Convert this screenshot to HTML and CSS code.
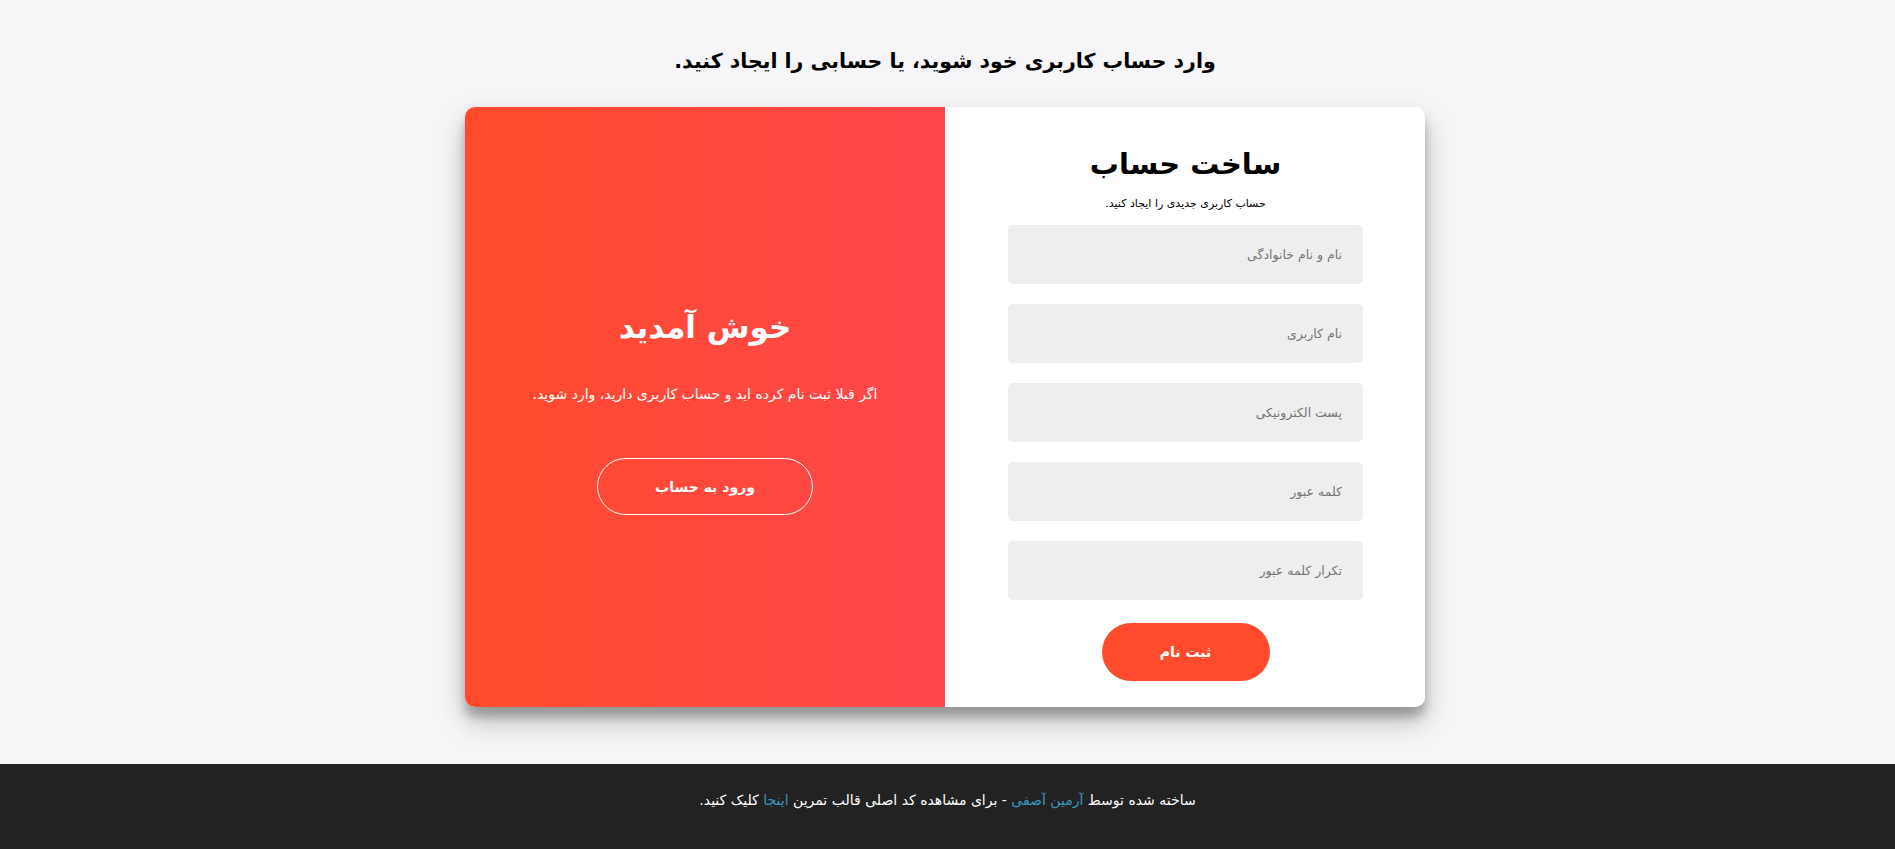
FILE: index.html
```html
<!DOCTYPE html>
<html lang="fa" dir="rtl">
<head>
<meta charset="utf-8">
<title>ساخت حساب</title>
<link rel="stylesheet" href="styles.css">
</head>
<body>
<main class="page">
  <h2 class="lead">وارد حساب کاربری خود شوید، یا حسابی را ایجاد کنید.</h2>
  <div class="card">
    <form class="signup">
      <h1 class="signup-title">ساخت حساب</h1>
      <p class="signup-sub">حساب کاربری جدیدی را ایجاد کنید.</p>
      <input class="field" type="text" placeholder="نام و نام خانوادگی">
      <input class="field" type="text" placeholder="نام کاربری">
      <input class="field" type="email" placeholder="پست الکترونیکی">
      <input class="field" type="password" placeholder="کلمه عبور">
      <input class="field" type="password" placeholder="تکرار کلمه عبور">
      <button class="submit" type="button">ثبت نام</button>
    </form>
    <div class="overlay">
      <h1 class="overlay-title">خوش آمدید</h1>
      <p class="overlay-text">اگر قبلا ثبت نام کرده اید و حساب کاربری دارید، وارد شوید.</p>
      <button class="ghost" type="button">ورود به حساب</button>
    </div>
  </div>
</main>
<footer class="footer">
  <p>ساخته شده توسط <a href="#">آرمین آصفی</a> - برای مشاهده کد اصلی قالب تمرین <a href="#">اینجا</a> کلیک کنید.</p>
</footer>
</body>
</html>
```
FILE: styles.css
```css
* { box-sizing: border-box; }

html, body {
  margin: 0;
  padding: 0;
}

body {
  background: #f6f5f7;
  font-family: "DejaVu Sans", "Noto Sans", sans-serif;
  color: #000;
}

.page {
  height: 764px;
  display: flex;
  flex-direction: column;
  align-items: center;
  padding-right: 5px;
}

.lead {
  margin: 46px 0 31px;
  font-size: 20.5px;
  line-height: 30px;
  font-weight: bold;
}

.card {
  width: 960px;
  height: 600px;
  display: flex;
  background: #fff;
  border-radius: 10px;
  overflow: hidden;
  box-shadow: 0 14px 28px rgba(0,0,0,0.25), 0 10px 10px rgba(0,0,0,0.22);
}

.signup {
  width: 480px;
  padding: 35px 62px 0 63px;
  display: flex;
  flex-direction: column;
  align-items: center;
  background: #fff;
}

.signup-title {
  margin: 0;
  font-size: 29px;
  line-height: 44px;
  font-weight: bold;
}

.signup-sub {
  margin: 10px 0 13px;
  font-size: 11px;
  line-height: 16px;
}

.field {
  width: 355px;
  height: 59px;
  margin: 0 0 20px;
  padding: 0 21px;
  border: none;
  border-radius: 5px;
  background: #eee;
  font-family: inherit;
  font-size: 12.5px;
  text-align: right;
  outline: none;
}

.field::placeholder { color: #757575; }

.field:last-of-type { margin-bottom: 23px; }

.submit {
  width: 168px;
  height: 58px;
  border: none;
  border-radius: 29px;
  background: #ff4b2b;
  color: #fff;
  font-family: inherit;
  font-size: 14px;
  font-weight: bold;
  letter-spacing: 1px;
}

.overlay {
  width: 480px;
  padding-top: 6px;
  display: flex;
  flex-direction: column;
  align-items: center;
  justify-content: center;
  color: #fff;
  background: linear-gradient(to left, #ff464c, #ff4b2b);
}

.overlay-title {
  margin: 0;
  font-size: 31px;
  line-height: 44px;
  font-weight: bold;
}

.overlay-text {
  margin: 35px 0 54px;
  font-size: 14px;
  line-height: 20px;
}

.ghost {
  width: 216px;
  height: 57px;
  border: 1px solid #fff;
  border-radius: 29px;
  background: transparent;
  color: #fff;
  font-family: inherit;
  font-size: 14px;
  font-weight: bold;
  letter-spacing: 1px;
}

.footer {
  height: 85px;
  background: #222;
  color: #fff;
  padding-top: 26px;
  text-align: center;
}

.footer p {
  margin: 0;
  font-size: 14px;
  line-height: 20px;
}

.footer a {
  color: #3c97bf;
  text-decoration: none;
}
```
